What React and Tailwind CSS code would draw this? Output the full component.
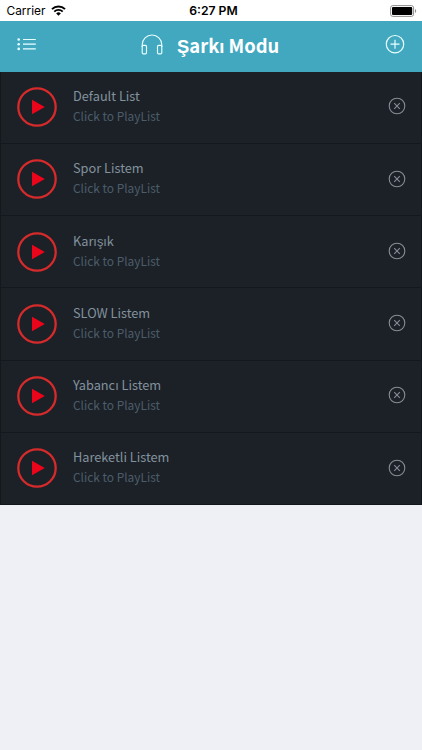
import React from "react";

const playlists = ["Default List", "Spor Listem", "Karışık", "SLOW Listem", "Yabancı Listem", "Hareketli Listem"];

function StatusBar() {
  return (
    <div className="grid h-[21px] shrink-0 grid-cols-3 items-center bg-white font-['Inter','Liberation_Sans',sans-serif] text-black">
      <div className="flex items-center gap-[6px] pl-[6.5px]">
        <span className="text-[11.9px] leading-[21px]">Carrier</span>
        <svg width="15" height="11" viewBox="0 0 15 11" fill="none" stroke="#000">
          <path d="M1 4.1a9.2 9.2 0 0 1 13 0" strokeWidth="2" />
          <path d="M3.3 6.6a6 6 0 0 1 8.4 0" strokeWidth="1.9" />
          <path d="M5.2 8.4a3.3 3.3 0 0 1 4.6 0L7.5 10.7z" fill="#000" stroke="none" />
        </svg>
      </div>
      <span className="pl-[5px] text-center text-[12.2px] font-semibold leading-[21px]">6:27 PM</span>
      <div className="flex justify-end pr-[5px]">
        <svg width="27" height="12" viewBox="0 0 27 12">
          <rect x="0.6" y="0.6" width="23" height="10.8" rx="2.2" fill="#fff" stroke="#8e8e8e" />
          <rect x="2" y="2" width="20.2" height="8" rx="1" fill="#000" />
          <path d="M25 4v4c1.6-.5 1.6-3.5 0-4z" fill="#8e8e8e" />
        </svg>
      </div>
    </div>
  );
}

function Header() {
  return (
    <header className="flex h-[50.6px] shrink-0 items-center bg-[#41a8c0] pl-[17px] pr-[17px] text-white">
      <svg width="20" height="14" viewBox="0 0 20 14" className="mb-[4.6px]" stroke="#e9ffff" fill="#e9ffff">
        <g stroke="none">
          <circle cx="1.7" cy="2.5" r="1.3" />
          <circle cx="1.7" cy="7.2" r="1.3" />
          <circle cx="1.7" cy="11.9" r="1.3" />
        </g>
        <path d="M6 2.5h12.8M6 7.2h12.8M6 11.9h12.8" strokeWidth="1.2" />
      </svg>
      <div className="flex flex-1 items-center pl-[104px]">
        <svg width="22" height="21" viewBox="0 0 22 21" className="mb-[3.6px]" fill="none" stroke="#e9ffff" strokeWidth="1.15">
          <path d="M1.2 13V10.8a9.8 9.8 0 0 1 19.6 0V13" />
          <rect x="1.2" y="11.3" width="4.3" height="8.5" rx="1.1" />
          <rect x="16.5" y="11.3" width="4.3" height="8.5" rx="1.1" />
        </svg>
        <h1 className="mb-[3px] ml-[14px] whitespace-nowrap font-['Noto_Sans_CJK_JP','Liberation_Sans',sans-serif] text-[18.4px] font-bold leading-[24px]">
          Şarkı Modu
        </h1>
      </div>
      <svg width="20" height="20" viewBox="0 0 20 20" className="mb-[4.6px]" fill="none" stroke="#e9ffff" strokeWidth="1.2">
        <circle cx="10" cy="10.2" r="8.7" />
        <path d="M10 5.7v9M5.5 10.2h9" />
      </svg>
    </header>
  );
}

function PlaylistRow({ name }) {
  return (
    <li className="flex h-[72.25px] items-center border-b border-[#13181d] pl-[16px] pr-[15px]">
      <svg width="40" height="40" viewBox="0 0 40 40">
        <circle cx="20" cy="20" r="18.7" fill="none" stroke="#d62a2b" strokeWidth="2.3" />
        <path d="M15 12.7v14.6L27.8 20z" fill="#ea051b" />
      </svg>
      <div className="mb-[2px] ml-[16px] flex-1 whitespace-nowrap font-['Noto_Sans_CJK_JP','Liberation_Sans',sans-serif] leading-[20px]">
        <p className="text-[12.75px] text-[#82929e]">{name}</p>
        <p className="text-[11.9px] text-[#4b5d6a]">Click to PlayList</p>
      </div>
      <svg width="18" height="18" viewBox="0 0 18 18" className="mb-[1.6px]" fill="none" stroke="#858d96">
        <circle cx="9" cy="9" r="7.8" strokeWidth="1.1" />
        <path d="M6.2 6.2l5.6 5.6M11.8 6.2l-5.6 5.6" strokeWidth="1.1" />
      </svg>
    </li>
  );
}

export default function App() {
  return (
    <div className="flex h-[750px] w-[422px] flex-col overflow-hidden bg-[#eff0f5]">
      <StatusBar />
      <Header />
      <ul className="border-x border-[#13181d] bg-[#1c2127]">
        {playlists.map((name) => (
          <PlaylistRow key={name} name={name} />
        ))}
      </ul>
    </div>
  );
}
